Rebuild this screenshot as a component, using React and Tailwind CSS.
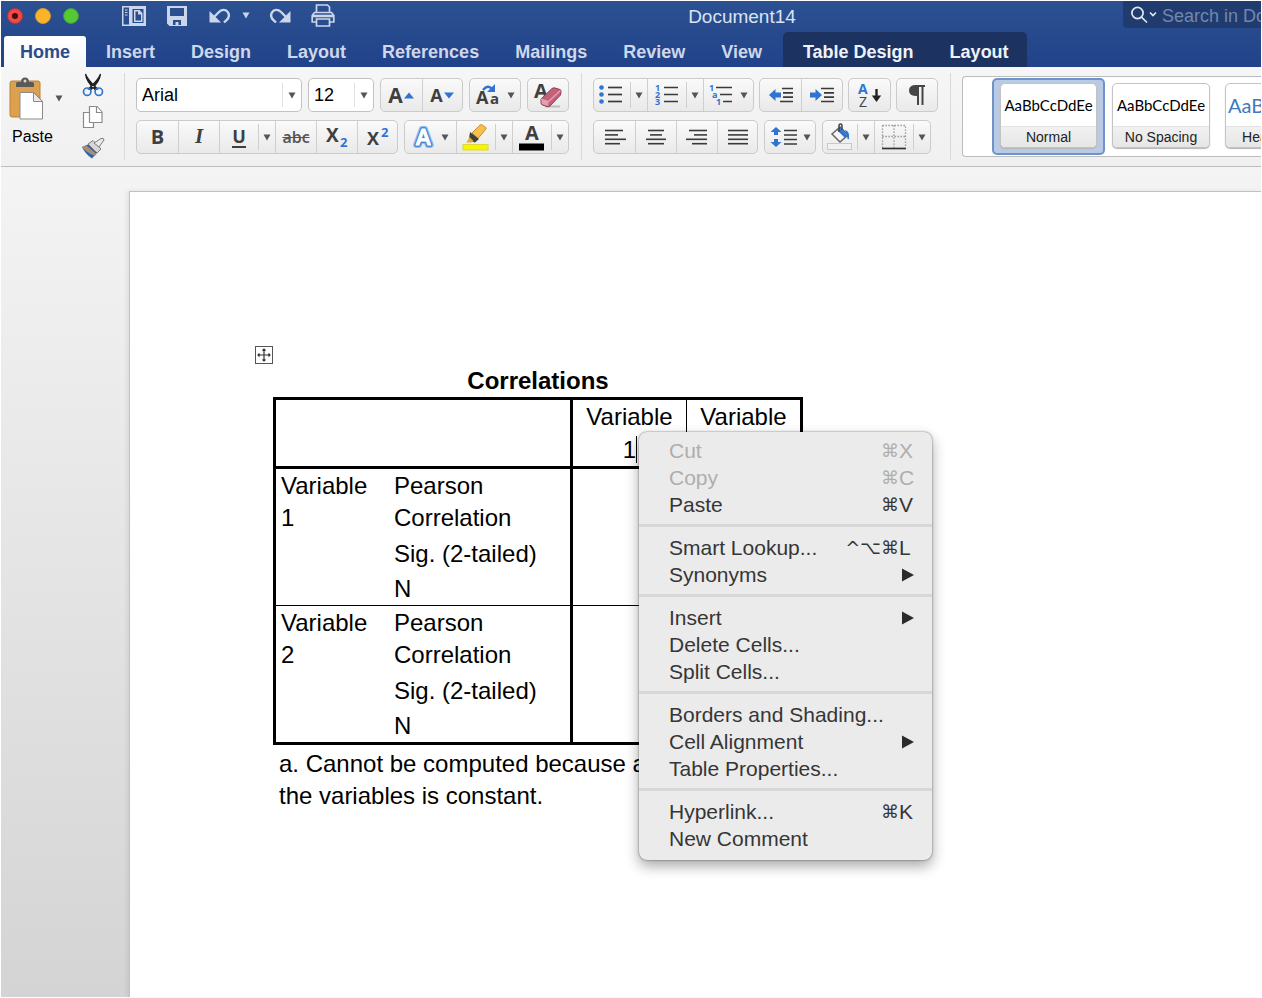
import React from "react";

const MENU = [
  [
    { label: "Cut", mods: "⌘", letter: "X", disabled: true },
    { label: "Copy", mods: "⌘", letter: "C", disabled: true },
    { label: "Paste", mods: "⌘", letter: "V" },
  ],
  [
    { label: "Smart Lookup...", mods: "^⌥⌘", letter: "L" },
    { label: "Synonyms", submenu: true },
  ],
  [
    { label: "Insert", submenu: true },
    { label: "Delete Cells..." },
    { label: "Split Cells..." },
  ],
  [
    { label: "Borders and Shading..." },
    { label: "Cell Alignment", submenu: true },
    { label: "Table Properties..." },
  ],
  [{ label: "Hyperlink...", mods: "⌘", letter: "K" }, { label: "New Comment" }],
];

const BLUE = "#2f74d0";
const INK = "#3a3a3a";

function Caret({ className = "fill-[#555]" }) {
  return (
    <svg width="8" height="7" viewBox="0 0 8 7" className={className} aria-hidden="true">
      <path d="M0.5 0.5h7L4 6.5z" />
    </svg>
  );
}

function Group({ children }) {
  return (
    <div className="flex h-[34px] shrink-0 rounded-[5px] border border-[#cbcbcb] bg-linear-to-b from-[#fafafa] to-[#e9e9e9] [&>*+*]:border-l [&>*+*]:border-[#cfcfcf]">
      {children}
    </div>
  );
}

function Tool({ label, w = "w-[41px]", children }) {
  return (
    <button type="button" aria-label={label} className={`flex h-full shrink-0 items-center justify-center ${w}`}>
      {children}
    </button>
  );
}

function Split({ label, w, children }) {
  return (
    <div className="flex items-center">
      <button type="button" aria-label={label} className={`flex h-full items-center justify-center ${w}`}>
        {children}
      </button>
      <button
        type="button"
        aria-label={`${label} options`}
        className="flex h-[26px] w-[17px] items-center justify-center border-l border-[#cfcfcf]"
      >
        <Caret />
      </button>
    </div>
  );
}

function Combo({ label, value, w }) {
  return (
    <div className={`relative flex h-[34px] items-center rounded-[5px] border border-[#c2c2c2] bg-white ${w}`}>
      <select
        aria-label={label}
        defaultValue={value}
        className="h-full w-full appearance-none bg-transparent pl-[5px] text-[18px] text-black outline-none"
      >
        <option>{value}</option>
      </select>
      <span className="pointer-events-none absolute inset-y-1 right-0 flex w-[19px] items-center justify-center border-l border-[#e2e2e2]">
        <Caret />
      </span>
    </div>
  );
}

function Lines({ rows }) {
  return (
    <svg width="24" height="18" viewBox="0 0 24 18" stroke={INK} strokeWidth="1.6" aria-hidden="true">
      {rows.map(([a, b], i) => (
        <path key={i} d={`M${a} ${2.5 + i * 4.4}H${b}`} />
      ))}
    </svg>
  );
}

function Divider() {
  return <div className="mr-[11px] ml-3 mt-[6px] h-[87px] w-px shrink-0 bg-[#d9d9d9]" />;
}

function TitleIcon({ label, w, children }) {
  return (
    <button type="button" aria-label={label} className={`flex h-6 shrink-0 items-center justify-center ${w}`}>
      {children}
    </button>
  );
}

function TitleBar() {
  return (
    <div className="flex h-[31px] items-start">
      <div className="flex h-[29px] w-[360px] shrink-0 items-center pl-[6px]">
        <div className="flex w-[115px] gap-3">
          <button type="button" aria-label="Close" className="flex size-4 items-center justify-center rounded-full border border-[#b3353c] bg-[#ee4b48]">
            <span className="size-[6px] rounded-full bg-[#4a0c0c]" />
          </button>
          <button type="button" aria-label="Minimise" className="size-4 rounded-full border border-[#cf9a33] bg-[#fbb429]" />
          <button type="button" aria-label="Zoom" className="size-4 rounded-full border border-[#3f9a3c] bg-[#55c833]" />
        </div>
        <TitleIcon label="Templates" w="w-6">
          <svg width="24" height="20" viewBox="0 0 24 20">
            <path fill="#ccd6ea" fillRule="evenodd" d="M0 0h24v20H0zM1.500 1.500v17H7v-17zM10.500 3v14h11V3z" />
            <path d="M3 4h2.500M3 6.500h2.500M3 9h2.500" stroke="#ccd6ea" strokeWidth="1.200" />
            <path fill="#ccd6ea" fillRule="evenodd" d="M12 4h5.500L20.500 7v9H12zM13.500 5.500v9H19V8.500h-3v-3z" />
          </svg>
        </TitleIcon>
        <TitleIcon label="Save" w="ml-[21px] w-5">
          <svg width="20" height="20" viewBox="0 0 20 20">
            <path fill="#ccd6ea" fillRule="evenodd" d="M0 0h20v20H2.500L0 17.500zM3 2v8h14V2zM6 14v5h2.500v-3h3v3H14v-5z" />
          </svg>
        </TitleIcon>
        <TitleIcon label="Undo" w="ml-[22px] w-[22px]">
          <svg width="22" height="16" viewBox="0 0 22 16" fill="none" stroke="#ccd6ea" strokeWidth="2.400">
            <path d="M4.500 9.500 10 4c3-3 7-2.800 9 .3 1.800 3 .8 5.500-1.200 7.500L15 14.500" />
            <path d="M0.500 3v11.500H12z" fill="#ccd6ea" stroke="none" />
          </svg>
        </TitleIcon>
        <TitleIcon label="Undo history" w="ml-[10px] w-[9px]">
          <Caret className="fill-[#ccd6ea]" />
        </TitleIcon>
        <TitleIcon label="Redo" w="ml-[19px] w-[22px]">
          <svg width="22" height="16" viewBox="0 0 22 16" fill="none" stroke="#ccd6ea" strokeWidth="2.400">
            <path d="M17.500 9.500 12 4C9 1 5 1.200 3 4.300c-1.800 3-.8 5.500 1.200 7.500L7 14.500" />
            <path d="M21.500 3v11.500H10z" fill="#ccd6ea" stroke="none" />
          </svg>
        </TitleIcon>
        <TitleIcon label="Print" w="ml-5 w-6">
          <svg width="24" height="23" viewBox="0 0 24 23" fill="none" stroke="#ccd6ea" strokeWidth="1.700">
            <path d="M5.500 8V1h11l2 2v5" />
            <path d="M5 18H1.200v-6.500l2.300-3h17l2.300 3V18H19" />
            <path d="M1.500 12h21" strokeWidth="2.600" />
            <path d="M5.500 15h13v7h-13z" />
          </svg>
        </TitleIcon>
      </div>
      <h1 className="min-w-0 flex-1 truncate text-center text-[19px] leading-[31px] text-[#dbe3f2]">Document14</h1>
      <label className="flex h-[27px] w-[138px] shrink-0 items-center overflow-hidden rounded-bl bg-[#203b6e] pl-2">
        <svg width="28" height="18" viewBox="0 0 28 18" fill="none" stroke="#dfe6f4" strokeWidth="1.700" className="shrink-0">
          <circle cx="6.500" cy="7" r="5.600" />
          <path d="M10.500 11.200 16 16.500" />
          <path d="m19 6.500 3 3 3-3" />
        </svg>
        <input
          type="search"
          aria-label="Search in Document"
          placeholder="Search in Document"
          className="ml-[3px] h-[27px] w-[180px] shrink-0 bg-transparent pt-[3px] text-[18px] outline-none placeholder:text-[#7287b0]"
        />
      </label>
    </div>
  );
}

const TAB = "h-full px-[18px] pt-[2px] text-[18px] font-bold";

function Tabs() {
  return (
    <nav aria-label="Ribbon tabs" className="flex h-[35px] items-end pl-[3px] whitespace-nowrap">
      <button type="button" className="h-[31px] rounded-t-[3px] bg-linear-to-b from-white to-[#f6f6f6] px-4 pt-[2px] text-[18px] font-bold text-[#2a4b8d]">
        Home
      </button>
      <div className="ml-0.5 flex h-[31px] text-[#cfd8ea]">
        {["Insert", "Design", "Layout", "References", "Mailings", "Review", "View"].map((t) => (
          <button key={t} type="button" className={TAB}>
            {t}
          </button>
        ))}
      </div>
      <div className="ml-[3px] flex h-full rounded-t-[5px] bg-[#1c3361] pt-1 pl-0.5 text-[#eef2fa]">
        {["Table Design", "Layout"].map((t) => (
          <button key={t} type="button" className={TAB}>
            {t}
          </button>
        ))}
      </div>
    </nav>
  );
}

function Clipboard() {
  return (
    <div className="flex w-[111px] shrink-0 justify-between pr-[7px] pl-[8px]">
      <div className="pt-[10px]">
        <div className="flex items-center">
          <button type="button" aria-label="Paste clipboard" className="h-[43px] w-[36px]">
            <svg width="36" height="43" viewBox="0 0 36 43">
              <rect x="1" y="4" width="30" height="36" rx="2" fill="#dca04f" stroke="#b9823c" />
              <path d="M7 10V6.500Q7 5 9 5h3q0-4.500 4-4.500T20 5h3q2 0 2 1.500V10z" fill="#595959" />
              <circle cx="16" cy="4" r="1.500" fill="#d9d9d9" />
              <path d="M11 15.500h14l8.500 9V42H11z" fill="#fff" stroke="#8b8b8b" />
              <path d="M24.500 15.500v9h9z" fill="#e8e8e8" stroke="#8b8b8b" />
            </svg>
          </button>
          <button type="button" aria-label="Paste options" className="ml-[10px] flex h-[43px] w-[9px] items-center">
            <Caret />
          </button>
        </div>
        <button type="button" className="mt-[7px] px-[3px] text-[16px] leading-5 text-black">
          Paste
        </button>
      </div>
      <div className="flex w-6 flex-col items-center gap-[8px] pt-[6px]">
        <button type="button" aria-label="Cut">
          <svg width="22" height="24" viewBox="0 0 22 24" fill="none">
            <path d="M3.500 1C5 5 9 10 15.500 16l-2.500.5C8 12 4 7 3.500 1zM18.500 1C17 5 13 10 6.500 16l2.500.5C14 12 18 7 18.500 1z" fill="#1f1f1f" stroke="#1f1f1f" strokeWidth="1.200" />
            <circle cx="5.200" cy="18.700" r="3.700" stroke={BLUE} strokeWidth="1.700" />
            <circle cx="16.800" cy="18.700" r="3.700" stroke={BLUE} strokeWidth="1.700" />
          </svg>
        </button>
        <button type="button" aria-label="Copy">
          <svg width="22" height="24" viewBox="0 0 22 24" fill="#fff" stroke="#8a8a8a" strokeWidth="1.200">
            <path d="M1.500 7.500h10v15h-10z" />
            <path d="M7.500 1.500h7.500l5 5.500v10.500H7.500z" />
            <path d="M14.500 1.500V7.500H20" />
          </svg>
        </button>
        <button type="button" aria-label="Format painter">
          <svg width="24" height="22" viewBox="0 0 24 22">
            <path d="M1 10 8 7l9 8-6 6.500Q4 17 1 10z" fill="#2f67ae" />
            <path d="m1 10 4-1.700L15.500 17l-1.500 1.700Q6 16 1 10z" fill="#a98f78" />
            <path d="M7 7 12 3.500 20 12l-4 4z" fill="#d6d6d6" stroke="#7c7c7c" />
            <path d="M13 6 20 1.500q3-1 3 1.500L18 10z" fill="#e9e9e9" stroke="#7c7c7c" />
          </svg>
        </button>
      </div>
    </div>
  );
}

const LETTER = "font-['Open_Sans',sans-serif] font-bold text-[#3f3f3f]";

function FontTools() {
  return (
    <div className="flex shrink-0 flex-col gap-[8px] pt-[11px]">
      <div className="flex gap-[6px]">
        <Combo label="Font" value="Arial" w="w-[166px]" />
        <Combo label="Font size" value="12" w="w-[66px]" />
        <Group>
          <Tool label="Grow font">
            <span className={`${LETTER} text-[21px] leading-none`}>A</span>
            <svg width="12" height="7" viewBox="0 0 12 7"><path d="M1 6.500h10L6 .5z" fill={BLUE} /></svg>
          </Tool>
          <Tool label="Shrink font" w="w-10">
            <span className={`${LETTER} text-[18px] leading-none`}>A</span>
            <svg width="12" height="7" viewBox="0 0 12 7"><path d="M1 .5h10L6 6.500z" fill={BLUE} /></svg>
          </Tool>
        </Group>
        <Group>
          <Tool label="Change case" w="w-[50px] gap-[6px]">
            <svg width="26" height="24" viewBox="0 0 26 24" fontFamily="Open Sans, sans-serif" fontWeight="700" fill="#3f3f3f">
              <text x="1" y="21" fontSize="18">A</text>
              <text x="15" y="21" fontSize="15">a</text>
              <path d="M8 7q5-6 9-1" fill="none" stroke={BLUE} strokeWidth="2.500" />
              <path d="M20 1v8h-8z" fill={BLUE} />
            </svg>
            <Caret />
          </Tool>
        </Group>
        <Group>
          <Tool label="Clear formatting" w="w-10">
            <svg width="30" height="28" viewBox="0 0 30 28">
              <text x="1" y="17" fontSize="20" fontFamily="Open Sans, sans-serif" fontWeight="700" fill="#3f3f3f">A</text>
              <path d="M12 25.500h15" stroke="#bdbdbd" strokeWidth="2" />
              <path d="M8 18 19 7.500q1.500-1 3-.5l5 1.500q1.500.5 1 2.500l-.5 3L17 25q-1 1-3 .5l-4.500-1.500q-1.500-.5-1.500-2z" fill="#c4607a" stroke="#8e3e54" />
              <path d="m8 18 7.500 2.500 12-11" fill="none" stroke="#e7a3b3" strokeWidth="1.300" />
              <path d="m8.500 18.500 7 2.200-.5 4.300-5-1.500q-1.500-.5-1.500-2z" fill="#e5a0b0" />
            </svg>
          </Tool>
        </Group>
      </div>
      <div className="flex gap-[6px]">
        <Group>
          <Tool label="Bold"><span className={`${LETTER} text-[20px]`}>B</span></Tool>
          <Tool label="Italic"><span className="font-['Liberation_Serif',serif] text-[21px] font-bold text-[#3f3f3f] italic">I</span></Tool>
          <Split label="Underline" w="w-[38px]"><span className={`${LETTER} border-b-2 border-[#3f3f3f] text-[18px] leading-5`}>U</span></Split>
          <Tool label="Strikethrough"><span className="font-['Open_Sans',sans-serif] text-[16px] font-semibold text-[#555] line-through">abc</span></Tool>
          <Tool label="Subscript">
            <svg width="24" height="26" viewBox="0 0 24 26" fontFamily="Open Sans, sans-serif" fontWeight="700">
              <text x="1" y="18" fontSize="19" fill="#3f3f3f">X</text>
              <text x="15" y="23" fontSize="13" fill={BLUE}>2</text>
            </svg>
          </Tool>
          <Tool label="Superscript" w="w-10">
            <svg width="24" height="26" viewBox="0 0 24 26" fontFamily="Open Sans, sans-serif" fontWeight="700">
              <text x="1" y="21" fontSize="18" fill="#3f3f3f">X</text>
              <text x="15" y="13" fontSize="13" fill={BLUE}>2</text>
            </svg>
          </Tool>
        </Group>
        <Group>
          <Tool label="Text effects" w="w-[51px] gap-[8px]">
            <svg width="20" height="22" viewBox="0 0 20 22" fontFamily="Open Sans, sans-serif" fontWeight="600" fontSize="22" strokeLinejoin="round">
              <text x="3" y="19" fill="none" stroke="#8fbcec" strokeWidth="6">A</text>
              <text x="3" y="19" fill="#fff" stroke="#3b83cf" strokeWidth="3.500">A</text>
              <text x="3" y="19" fill="#fff" stroke="#fff" strokeWidth="1">A</text>
            </svg>
            <Caret />
          </Tool>
          <Split label="Highlight colour" w="w-[38px]">
            <svg width="28" height="28" viewBox="0 0 28 28">
              <rect x="1" y="21.500" width="25" height="5.500" fill="#f8f500" stroke="#dcd83c" />
              <path d="m10 10 8-8q1-.8 2.500.2l3 2q1 1 .3 2L16 15.500z" fill="#f6c04a" stroke="#c48f2e" />
              <path d="m8 9 9 7-4 3.500-3-1-3-3z" fill="#3f3f3f" />
              <path d="m7.500 14 4 4-2 1.500H4.500z" fill="#e2a93c" />
            </svg>
          </Split>
          <Split label="Font colour" w="w-[38px]">
            <svg width="28" height="28" viewBox="0 0 28 28">
              <text x="7" y="17" fontSize="20" fontFamily="Open Sans, sans-serif" fontWeight="700" fill="#3f3f3f">A</text>
              <rect x="1" y="20.500" width="25" height="7" fill="#000" />
            </svg>
          </Split>
        </Group>
      </div>
    </div>
  );
}

function ParagraphTools() {
  return (
    <div className="flex shrink-0 flex-col gap-[8px] pt-[11px]">
      <div className="flex gap-[5px]">
        <Group>
          <Split label="Bullets" w="w-[36px]">
            <svg width="26" height="22" viewBox="0 0 26 22">
              {[3.5, 10.5, 17.5].map((y) => (
                <g key={y}>
                  <circle cx="2.500" cy={y} r="2.300" fill={BLUE} />
                  <path d={`M9 ${y}h14`} stroke={INK} strokeWidth="1.700" />
                </g>
              ))}
            </svg>
          </Split>
          <Split label="Numbering" w="w-[38px]">
            <svg width="24" height="22" viewBox="0 0 24 22" fontFamily="Open Sans, sans-serif" fontWeight="700" fontSize="9" fill={BLUE}>
              <text x="0" y="7">1</text>
              <text x="0" y="14">2</text>
              <text x="0" y="21">3</text>
              <path d="M9 3.500h14M9 10.500h14M9 17.500h14" stroke={INK} strokeWidth="1.700" />
            </svg>
          </Split>
          <Tool label="Multilevel list" w="w-[50px] gap-[7px]">
            <svg width="24" height="22" viewBox="0 0 24 22" fontFamily="Open Sans, sans-serif" fontWeight="700" fontSize="9" fill={BLUE}>
              <text x="0" y="7">1</text>
              <text x="3" y="14">a</text>
              <text x="7" y="21">1</text>
              <path d="M7 3.500h16M11 10.500h12M14 17.500h9" stroke={INK} strokeWidth="1.700" />
            </svg>
            <Caret />
          </Tool>
        </Group>
        <Group>
          <Tool label="Decrease indent">
            <svg width="26" height="18" viewBox="0 0 26 18">
              <path d="M14 2.500h11M15 6.800h10M15 11.200h10M12 15.500h13" stroke={INK} strokeWidth="1.700" />
              <path d="M1 9 7.500 3v3.500H13v5H7.500V15z" fill={BLUE} />
            </svg>
          </Tool>
          <Tool label="Increase indent">
            <svg width="26" height="18" viewBox="0 0 26 18">
              <path d="M12 2.500h13M15 6.800h10M15 11.200h10M12 15.500h13" stroke={INK} strokeWidth="1.700" />
              <path d="M13 9 6.500 3v3.500H1v5h5.500V15z" fill={BLUE} />
            </svg>
          </Tool>
        </Group>
        <Group>
          <Tool label="Sort">
            <svg width="26" height="26" viewBox="0 0 26 26" fontFamily="Open Sans, sans-serif" fontSize="14">
              <text x="1" y="12" fontWeight="700" fill={BLUE}>A</text>
              <text x="2" y="24.500" fontWeight="400" fill="#444">Z</text>
              <path d="M19.500 7v8" stroke="#222" strokeWidth="2.400" />
              <path d="M14.800 13.500h9.400L19.500 20z" fill="#222" />
            </svg>
          </Tool>
        </Group>
        <Group>
          <Tool label="Show formatting marks" w="w-10">
            <svg width="18" height="22" viewBox="0 0 18 22" fill="#454545">
              <path d="M17 1v2h-1.500v18h-2V3H11v18H9V12Q1 12 1 6.500T8 1z" />
            </svg>
          </Tool>
        </Group>
      </div>
      <div className="flex gap-[6px]">
        <Group>
          <Tool label="Align left"><Lines rows={[[2, 20], [2, 15], [2, 23], [2, 17]]} /></Tool>
          <Tool label="Align centre"><Lines rows={[[4, 20], [6, 18], [2, 22], [4, 20]]} /></Tool>
          <Tool label="Align right"><Lines rows={[[4, 22], [9, 22], [1, 22], [7, 22]]} /></Tool>
          <Tool label="Justify" w="w-10"><Lines rows={[[2, 22], [2, 22], [2, 22], [2, 22]]} /></Tool>
        </Group>
        <Group>
          <Tool label="Line spacing" w="w-[50px] gap-[5px]">
            <svg width="28" height="22" viewBox="0 0 28 22">
              <path d="M14 4.500h13M14 9h13M14 13.500h13M14 18h13" stroke={INK} strokeWidth="1.700" />
              <path d="M6 1l5.500 5H8v3H4V6H.5zM6 21l5.500-5H8v-3H4v3H.5z" fill={BLUE} />
            </svg>
            <Caret />
          </Tool>
        </Group>
        <Group>
          <Split label="Shading" w="w-[34px]">
            <svg width="26" height="28" viewBox="0 0 26 28">
              <rect x=".5" y="20.500" width="24" height="6" fill="#f1f1f1" stroke="#c8c8c8" />
              <path d="m5 11 8-7 8 8-8 7z" fill="#f6f6f6" stroke="#666" strokeWidth="1.500" />
              <path d="m10 7 8 8 2.500-2.500-7.500-8z" fill={BLUE} />
              <path d="M18 7q5 1 4 9-2 1-2-4z" fill={BLUE} />
              <path d="M12 9V3q0-2 1.500-2T15 3v4" fill="none" stroke="#444" strokeWidth="1.500" />
            </svg>
          </Split>
          <Split label="Borders" w="w-[38px]">
            <svg width="26" height="26" viewBox="0 0 26 26" fill="none">
              <path d="M1.500 1.500h23v22M1.500 1.500v22M13 1.500v22M1.500 12.500h23" stroke="#8a8a8a" strokeWidth="1.300" strokeDasharray="1.300 1.700" />
              <path d="M1 24.500h24" stroke="#333" strokeWidth="1.700" />
            </svg>
          </Split>
        </Group>
      </div>
    </div>
  );
}

function StyleCard({ name, w, sample }) {
  return (
    <button type="button" className={`flex h-[65px] shrink-0 flex-col overflow-hidden rounded-[5px] border border-[#c3c3c3] bg-white shadow-[0_1px_1px_#b5b5b5] ${w}`}>
      <span className={`flex w-full flex-1 items-center font-['Lato',sans-serif] ${sample}`}>AaBbCcDdEe</span>
      <span className="w-full border-t border-[#e2e2e2] bg-linear-to-b from-[#f1f1f1] to-[#e6e6e6] text-center text-[14px] leading-[20px] text-[#222]">{name}</span>
    </button>
  );
}

function StyleGallery() {
  return (
    <div className="mt-[9px] flex h-[81px] min-w-0 flex-1 overflow-hidden rounded-l-[4px] border border-r-0 border-[#bcbcbc] bg-white pt-px pl-[29px]">
      <div className="h-[77px] shrink-0 rounded-[5px] border-2 border-[#6f93c9] bg-[#b9cae4] px-[6px] pt-[3px]">
        <StyleCard name="Normal" w="w-[97px]" sample="justify-center text-[15px] text-black" />
      </div>
      <div className="flex shrink-0 gap-[15px] pt-[5px] pl-[7px]">
        <StyleCard name="No Spacing" w="w-[98px]" sample="justify-center text-[15px] text-black" />
        <StyleCard name="Heading 1" w="w-[98px]" sample="justify-start pl-[2px] text-[20px] text-[#3c7ac0]" />
      </div>
    </div>
  );
}

const EDGE = "border-r-[3px] border-black";

function Rows({ index, last }) {
  const labels = ["Sig. (2-tailed)", "N"];
  const bottom = last ? "" : "border-b border-black";
  return (
    <>
      <tr>
        <th scope="rowgroup" rowSpan={3} className={`pt-px pl-[5px] text-left align-top font-normal ${bottom}`}>
          Variable
          <br />
          {index}
        </th>
        <td className={`pt-px pb-1 ${EDGE}`}>
          Pearson
          <br />
          Correlation
        </td>
        <td className="border-r border-black" />
        <td />
      </tr>
      {labels.map((l, i) => (
        <tr key={l}>
          <td className={`${EDGE} ${i === 0 ? "pb-[3px]" : bottom}`}>{l}</td>
          <td className={`border-r border-black ${i === 1 ? bottom : ""}`} />
          <td className={i === 1 ? bottom : ""} />
        </tr>
      ))}
    </>
  );
}

function Page() {
  return (
    <article className="mt-6 ml-[128px] min-w-0 flex-1 overflow-hidden border-t border-l border-[#c2c2c2] bg-white pt-[154px] pl-[125px] text-[24px] leading-8 whitespace-nowrap text-black shadow-[-2px_0_5px_rgba(0,0,0,0.08)]">
      <button type="button" aria-label="Select table" className="block size-[18px]">
        <svg width="18" height="18" viewBox="0 0 18 18" fill="none" stroke="#333">
          <rect x=".5" y=".5" width="17" height="17" stroke="#555" />
          <path d="M9 3v12M3 9h12M7.500 4.500 9 3l1.500 1.500M7.500 13.500 9 15l1.500-1.500M4.500 7.500 3 9l1.500 1.500M13.500 7.500 15 9l-1.500 1.500" strokeWidth="1.200" />
        </svg>
      </button>
      <table className="ml-[18px] w-[530px] table-fixed border-separate border-spacing-0">
        <caption className="pt-px font-bold">Correlations</caption>
        <colgroup>
          <col className="w-[121px]" />
          <col className="w-[179px]" />
          <col className="w-[114px]" />
          <col />
        </colgroup>
        <thead className="leading-[33px]">
          <tr className="[&>*]:border-t-[3px] [&>*]:border-b-[3px] [&>*]:border-black">
            <td colSpan={2} className={`border-l-[3px] ${EDGE}`} />
            <th scope="col" className="border-r px-2 text-center align-top font-normal">
              Variable
              <br />
              <span className="relative">
                1<span className="absolute top-0 left-full h-[27px] w-px bg-black" />
              </span>
            </th>
            <th scope="col" className="border-r-[3px] px-2 text-center align-top font-normal">
              Variable
              <br />2
            </th>
          </tr>
        </thead>
        <tbody className="[&_td:last-child]:border-r-[3px] [&_td:last-child]:border-black [&_th]:border-l-[3px] [&_th]:border-black">
          <Rows index="1" />
          <Rows index="2" last />
        </tbody>
        <tfoot>
          <tr>
            <td colSpan={4} className="border-t-[3px] border-black pt-[3px] pl-[6px]">
              a. Cannot be computed because at least one of
              <br />
              the variables is constant.
            </td>
          </tr>
        </tfoot>
      </table>
    </article>
  );
}

function ContextMenu() {
  return (
    <div
      role="menu"
      className="absolute top-[432px] left-[639px] w-[293px] rounded-[8px] bg-[#ebebeb] pt-[5px] pb-2 text-[21px] leading-[27px] text-[#363636] shadow-[0_0_2px_rgba(0,0,0,0.6),0_6px_14px_rgba(0,0,0,0.35)]"
    >
      {MENU.map((section, s) => (
        <div key={s} role="group" className={s ? "mt-[6px] border-t-[3px] border-[#d8d8d8] pt-[7px]" : ""}>
          {section.map((item) => (
            <button
              key={item.label}
              type="button"
              role="menuitem"
              disabled={item.disabled}
              className="flex h-[27px] w-full items-center pr-[17px] pl-[30px] text-left disabled:text-[#aeaeae]"
            >
              <span className="flex-1">{item.label}</span>
              {item.letter && (
                <span className="flex items-center">
                  <span className="font-['DejaVu_Sans',sans-serif] text-[18px]">{item.mods}</span>
                  <span className="w-4">{item.letter}</span>
                </span>
              )}
              {item.submenu && (
                <svg width="13" height="14" viewBox="0 0 13 14" className="fill-[#2b2b2b]">
                  <path d="M0 .5v13L12 7z" />
                </svg>
              )}
            </button>
          ))}
        </div>
      ))}
    </div>
  );
}

export default function App() {
  return (
    <div className="relative flex min-h-screen flex-col overflow-hidden bg-white p-px font-['Liberation_Sans',Arial,sans-serif] [&_svg]:overflow-visible">
      <header className="bg-linear-to-b from-[#2c5191] to-[#21428a]">
        <TitleBar />
        <Tabs />
      </header>
      <section aria-label="Ribbon" className="flex h-[100px] border-b border-[#bdbdbd] bg-linear-to-b from-[#f6f6f6] to-[#f0f0f0]">
        <Clipboard />
        <Divider />
        <FontTools />
        <Divider />
        <ParagraphTools />
        <Divider />
        <StyleGallery />
      </section>
      <main className="flex flex-1 bg-linear-to-b from-[#f4f4f4] to-[#d4d4d4]">
        <Page />
      </main>
      <ContextMenu />
    </div>
  );
}
